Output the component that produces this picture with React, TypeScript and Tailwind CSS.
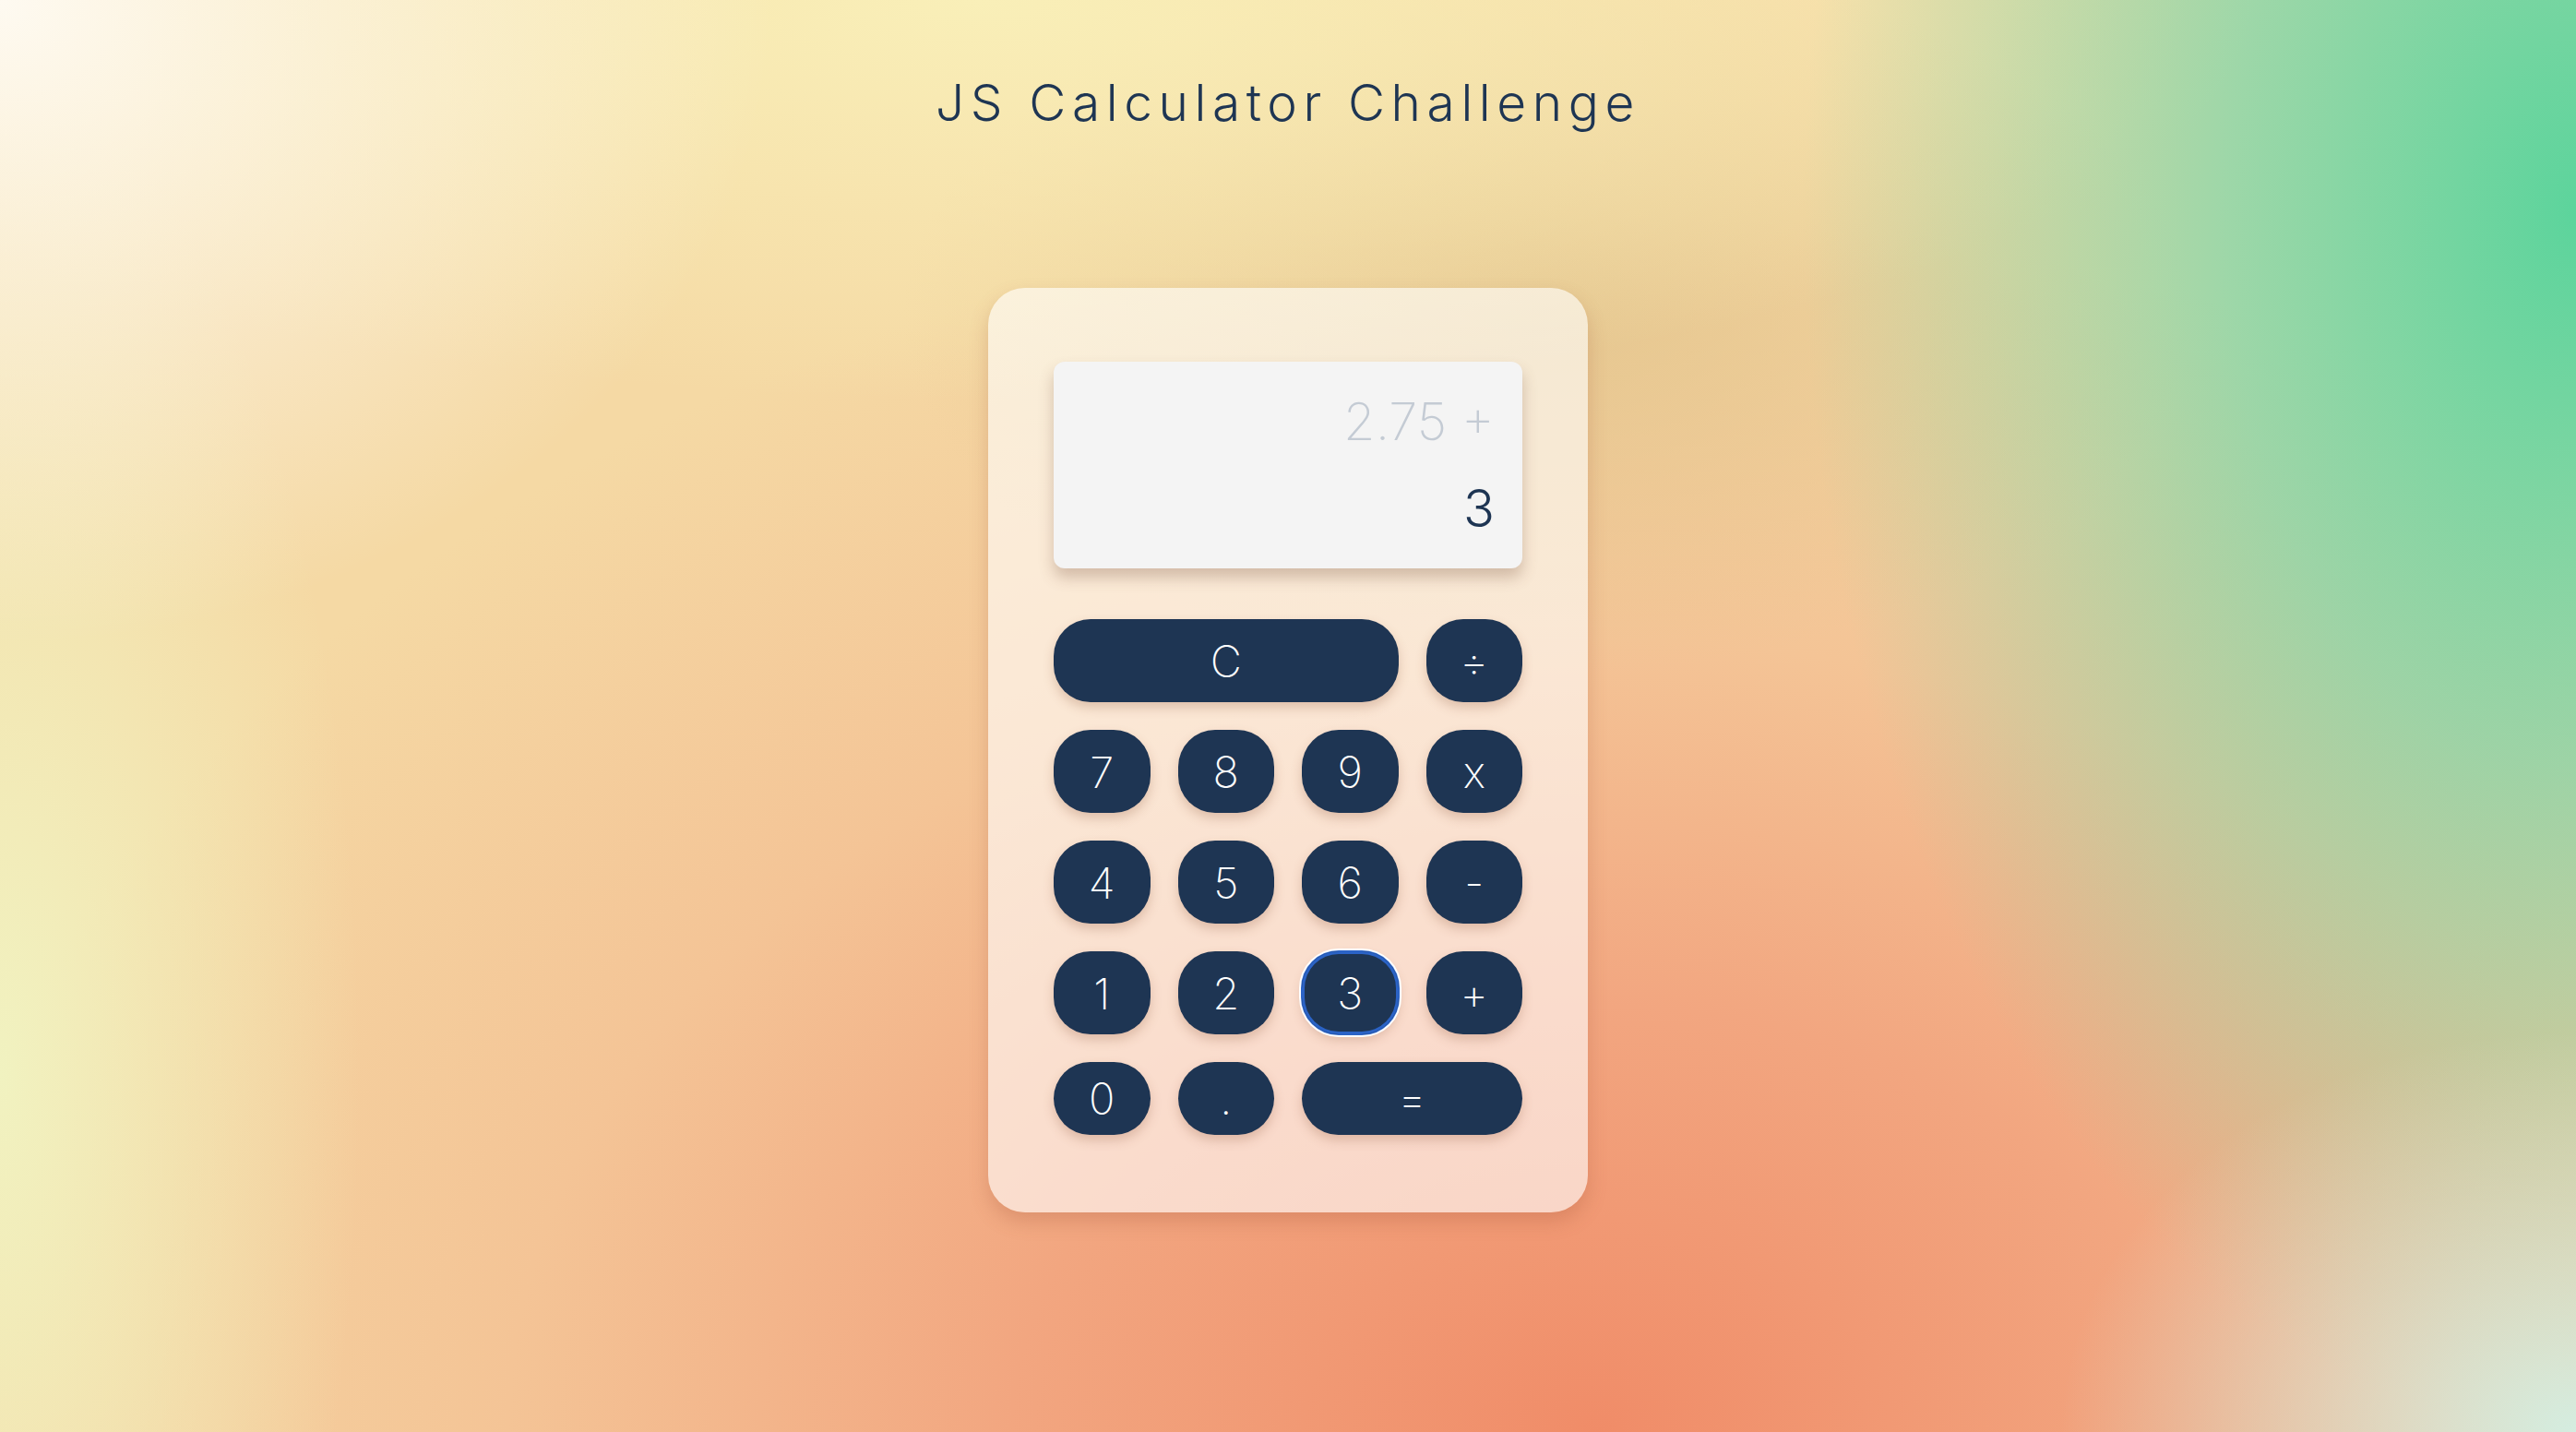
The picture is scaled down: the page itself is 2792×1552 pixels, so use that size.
import React from 'react';

type Key = {
  label: string;
  span?: string;
  focused?: boolean;
};

const rows: Key[][] = [
  [{ label: 'C', span: 'col-span-3' }, { label: '÷' }],
  [{ label: '7' }, { label: '8' }, { label: '9' }, { label: 'x' }],
  [{ label: '4' }, { label: '5' }, { label: '6' }, { label: '-' }],
  [{ label: '1' }, { label: '2' }, { label: '3', focused: true }, { label: '+' }],
];

const lastRow: Key[] = [{ label: '0' }, { label: '.' }, { label: '=', span: 'col-span-2' }];

const CalcButton: React.FC<{ k: Key; short?: boolean }> = ({ k, short }) => (
  <button
    className={`${k.span ?? ''} ${short ? 'h-[79px]' : 'h-[90px]'} flex items-center justify-center rounded-[40px] bg-[#1e3553] text-white text-[47px] font-extralight leading-none ${
      k.focused
        ? 'shadow-[inset_0_0_0_3px_#2b63c6,0_0_0_1px_#2b63c6,0_0_0_3px_#ffffff,0_6px_12px_rgba(140,80,50,0.25)]'
        : 'shadow-[0_6px_12px_rgba(140,80,50,0.25)]'
    }`}
  >
    {k.label}
  </button>
);

export default function App() {
  return (
    <div className="min-h-screen w-full flex flex-col items-center font-['Inter',sans-serif] [background-image:radial-gradient(ellipse_20%_28%_at_100%_100%,#d4ede0_0%,rgba(212,237,224,0)_100%),radial-gradient(ellipse_30%_85%_at_100%_15%,#5cd49c_0%,rgba(120,214,170,0.7)_45%,rgba(120,214,170,0)_100%),radial-gradient(ellipse_30%_45%_at_0%_0%,#fefaf1_0%,rgba(254,250,241,0)_100%),radial-gradient(ellipse_14%_70%_at_0%_75%,#f1f2c0_0%,rgba(241,242,192,0)_100%),radial-gradient(ellipse_50%_28%_at_38%_0%,#f9efb8_0%,rgba(249,239,184,0)_100%),radial-gradient(ellipse_25%_25%_at_60%_22%,rgba(226,196,140,0.8)_0%,rgba(226,196,140,0)_100%),radial-gradient(ellipse_65%_85%_at_62%_100%,#f08c68_0%,#f2a680_35%,#f4c496_65%,#f5d9a4_100%)]">
      <h1 className="mt-[84px] text-[55px] leading-none font-light tracking-[0.12em] text-[#1e3553]">
        JS Calculator Challenge
      </h1>

      <div className="mt-[173px] w-[650px] rounded-[40px] bg-white/60 px-[71px] pt-[80px] pb-[84px] shadow-[0_10px_20px_rgba(160,80,50,0.25)]">
        {/* display */}
        <div className="h-[224px] rounded-[12px] bg-[#f4f4f4] pr-[30px] py-[37px] flex flex-col items-end gap-[38px] text-[56px] font-extralight leading-none shadow-[0_10px_16px_rgba(120,80,60,0.3)]">
          <div className="text-[#c4cbd4]">2.75 +</div>
          <div className="text-[#1e3553] font-light">3</div>
        </div>

        {/* keys */}
        <div className="mt-[55px] grid grid-cols-4 gap-[30px]">
          {rows.map((row) => row.map((k) => <CalcButton key={k.label} k={k} />))}
          {lastRow.map((k) => (
            <CalcButton key={k.label} k={k} short />
          ))}
        </div>
      </div>
    </div>
  );
}
